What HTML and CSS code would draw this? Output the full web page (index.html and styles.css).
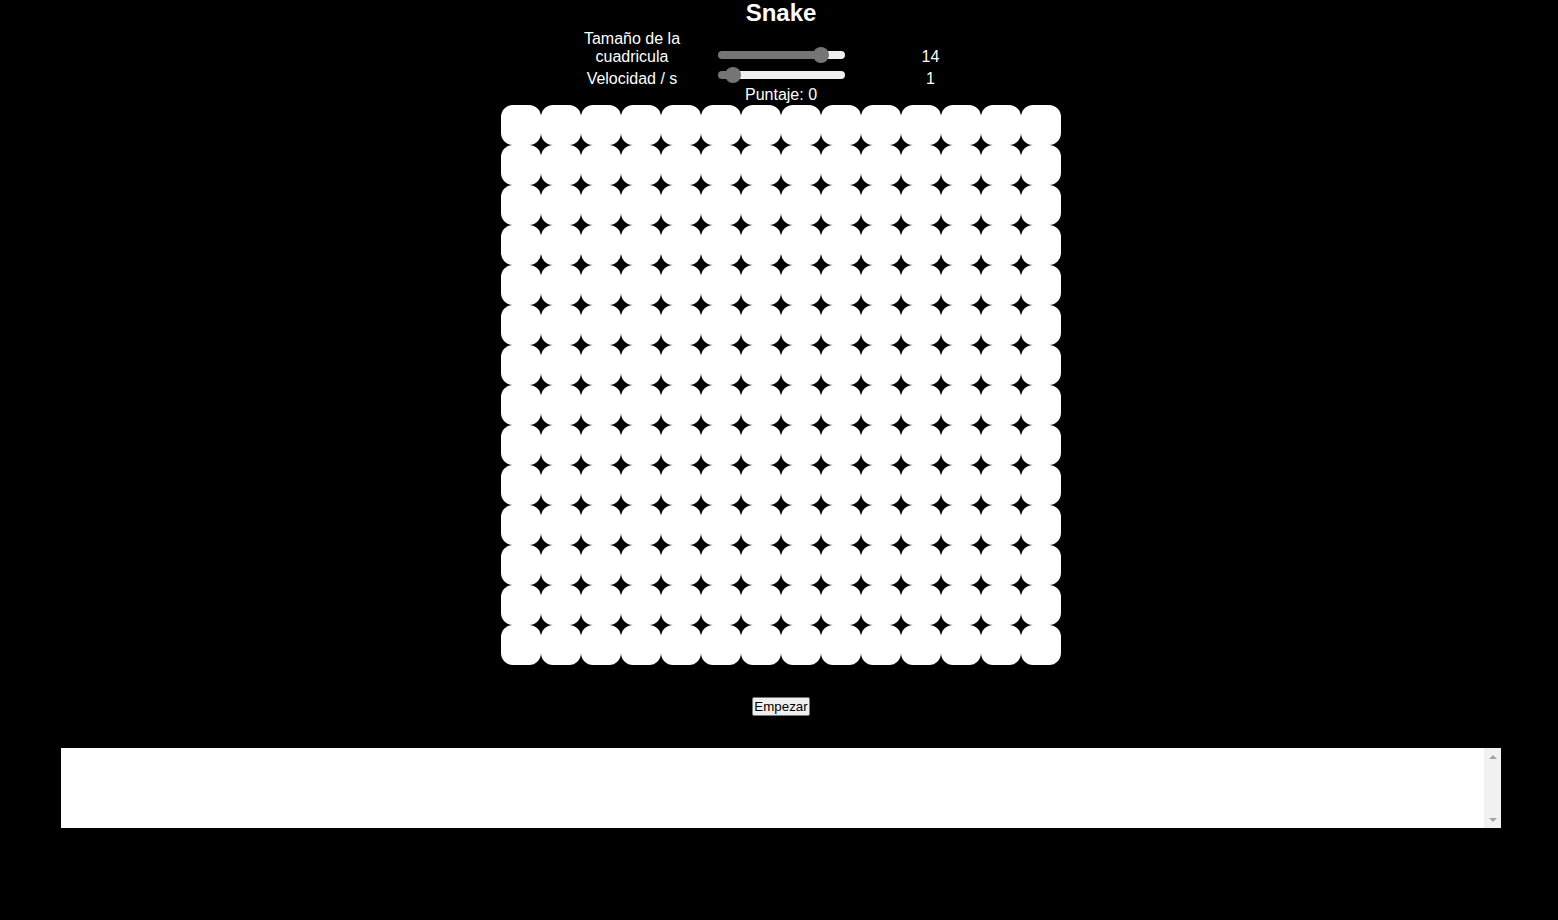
FILE: index.html
```html
<!DOCTYPE html>
<html lang="es">
<head>
<meta charset="utf-8">
<title>Snake</title>
<link rel="stylesheet" href="styles.css">
</head>
<body>
<main class="app">
  <h1 class="title">Snake</h1>
  <div class="controls">
    <label class="ctl-label" for="size">Tamaño de la cuadricula</label>
    <div class="ctl-slider"><input id="size" class="range" type="range" min="2" max="16" value="14" style="--fill: 103px"></div>
    <div class="ctl-value">14</div>
    <label class="ctl-label" for="speed">Velocidad / s</label>
    <div class="ctl-slider"><input id="speed" class="range range-low" type="range" min="0" max="15" value="1" style="--fill: 15px"></div>
    <div class="ctl-value">1</div>
  </div>
  <div class="score">Puntaje: 0</div>
  <div class="board" id="board"></div>
  <button class="start" type="button">Empezar</button>
  <div class="log-box">
    <textarea class="log"></textarea>
    <div class="scrollbar" aria-hidden="true">
      <div class="sb-btn"><span class="arrow-up"></span></div>
      <div class="sb-btn"><span class="arrow-down"></span></div>
    </div>
  </div>
</main>
<script>
  var b = document.getElementById('board');
  for (var i = 0; i < 196; i++) {
    var c = document.createElement('div');
    c.className = 'cell';
    b.appendChild(c);
  }
</script>
</body>
</html>
```

FILE: styles.css
```css
html, body {
  background: #000;
}
body {
  margin: 0;
  padding: 0 0 0 4px;
  color: #fff;
  font-family: "Liberation Sans", Arial, sans-serif;
  font-size: 16px;
  line-height: 18px;
}
.app {
  display: flex;
  flex-direction: column;
  align-items: center;
}
.title {
  margin: 0;
  font-size: 24px;
  line-height: 26px;
  font-weight: bold;
}
.controls {
  margin-top: 4px;
  width: 450px;
  display: grid;
  grid-template-columns: 152px 150px 145px;
  row-gap: 4px;
  align-items: end;
}
.ctl-label {
  text-align: center;
}
.ctl-slider {
  height: 18px;
  display: flex;
  align-items: center;
}
.ctl-value {
  text-align: center;
}
.range {
  -webkit-appearance: none;
  appearance: none;
  width: 127px;
  height: 16px;
  margin: 0 0 4px 10px;
  padding: 0;
  background: transparent;
  display: block;
  flex: none;
}
.range-low {
  margin-bottom: 8px;
}
.range::-webkit-slider-runnable-track {
  height: 8px;
  border-radius: 4px;
  background: linear-gradient(to right, #757575 var(--fill), #efefef var(--fill));
}
.range::-webkit-slider-thumb {
  -webkit-appearance: none;
  appearance: none;
  width: 16px;
  height: 16px;
  border-radius: 50%;
  background: #757575;
  margin-top: -4px;
  border: none;
}
.score {
  margin-top: -2px;
}
.board {
  margin-top: 1px;
  display: grid;
  grid-template-columns: repeat(14, 40px);
  grid-auto-rows: 40px;
}
.cell {
  background: #fff;
  border-radius: 12px;
}
.start {
  margin-top: 32px;
  font-family: "Liberation Sans", Arial, sans-serif;
  font-size: 13.33px;
  line-height: 15px;
  padding: 1px 1px;
  border: 1px solid #767676;
  border-radius: 2px;
  background: #efefef;
  color: #000;
}
.log-box {
  margin-top: 32px;
  display: flex;
  width: 1440px;
  height: 80px;
  background: #fff;
}
.log {
  flex: 1;
  display: block;
  height: 80px;
  box-sizing: border-box;
  border: none;
  padding: 2px;
  margin: 0;
  resize: none;
  overflow: hidden;
  background: #fff;
  outline: none;
}
.scrollbar {
  width: 17px;
  background: #f1f1f1;
  display: flex;
  flex-direction: column;
  justify-content: space-between;
}
.sb-btn {
  height: 17px;
  display: flex;
  align-items: center;
  justify-content: center;
}
.arrow-up {
  width: 0;
  height: 0;
  border-left: 4px solid transparent;
  border-right: 4px solid transparent;
  border-bottom: 4px solid #a3a3a3;
}
.arrow-down {
  width: 0;
  height: 0;
  border-left: 4px solid transparent;
  border-right: 4px solid transparent;
  border-top: 4px solid #a3a3a3;
}
```
